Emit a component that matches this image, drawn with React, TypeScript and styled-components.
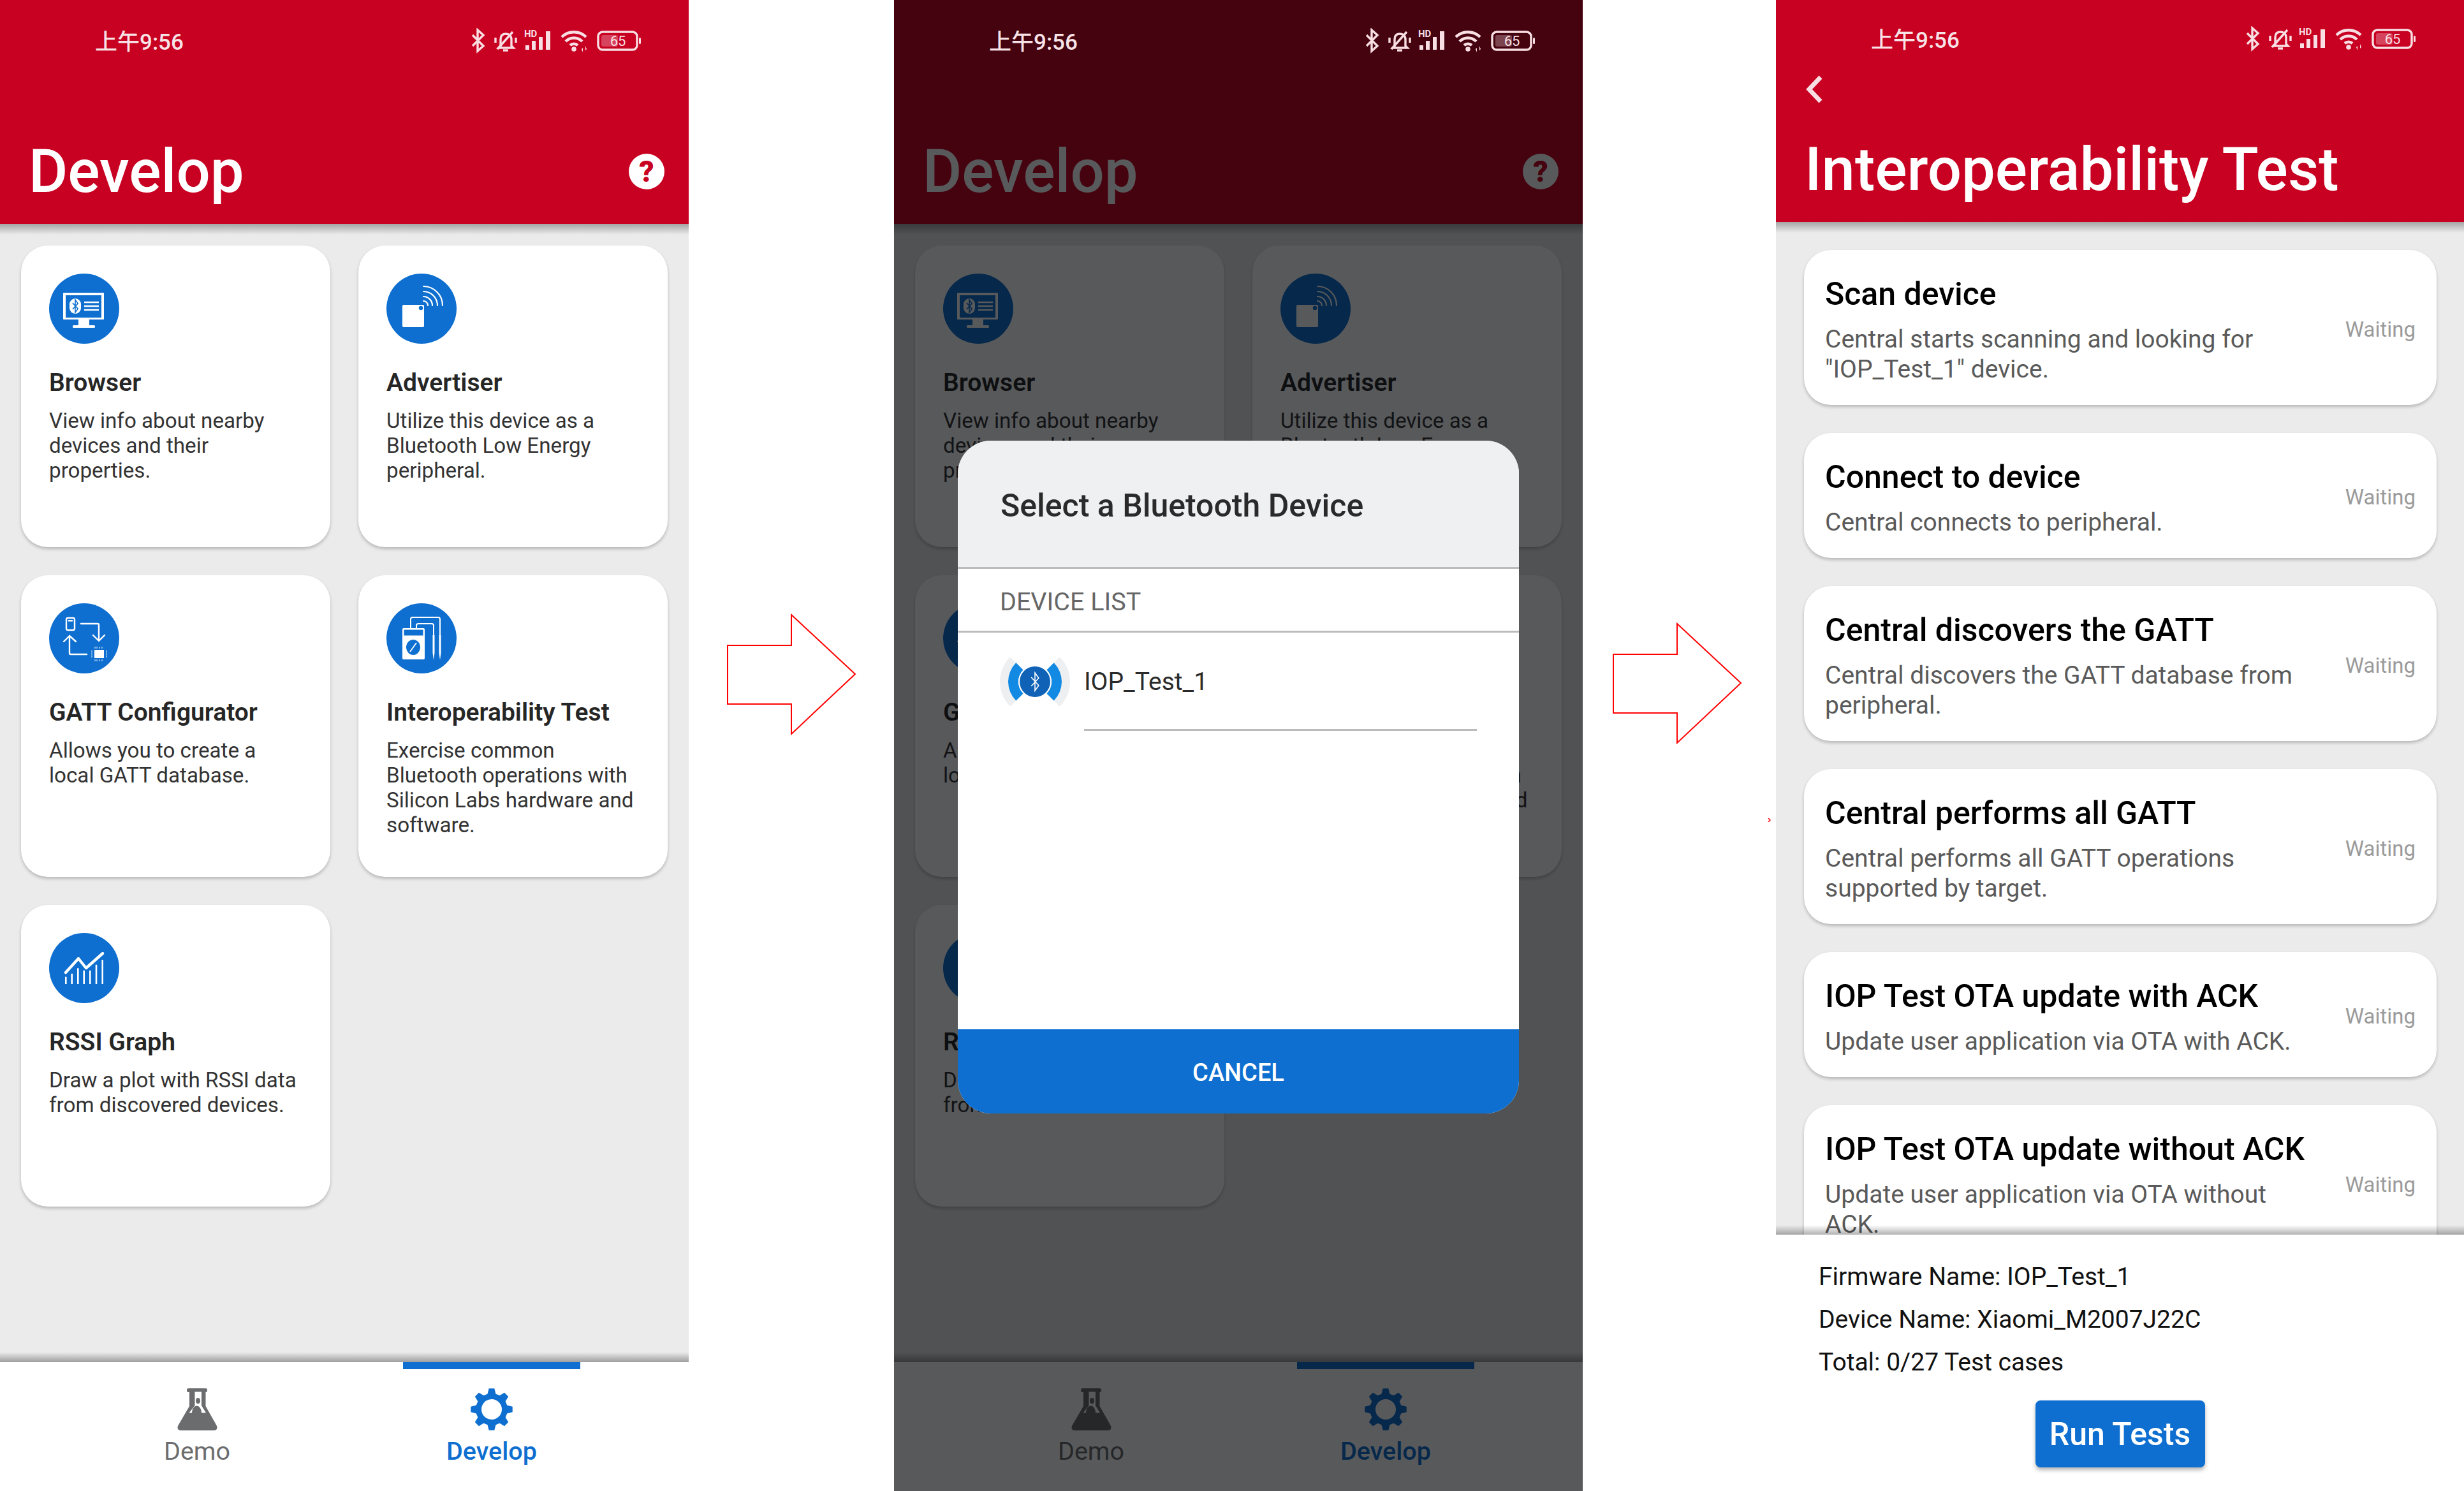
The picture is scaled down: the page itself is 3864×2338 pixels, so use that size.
import React from 'react';
import styled, { createGlobalStyle } from 'styled-components';

const RED = '#c80021';
const BLUE = '#0e6fd0';
const FONT = 'Roboto, "Noto Sans CJK SC", sans-serif';

const GlobalStyle = createGlobalStyle`
  html, body {
    margin: 0;
    padding: 0;
    background: #fff;
    font-family: ${FONT};
  }
`;

const Page = styled.div`
  display: flex;
  width: 3864px;
  height: 2338px;
  overflow: hidden;
  background: #fff;
`;

const Phone = styled.div<{ $width?: number }>`
  position: relative;
  display: flex;
  flex-direction: column;
  flex: none;
  width: ${p => p.$width ?? 1080}px;
  height: 2338px;
  overflow: hidden;
  background: #ebebeb;
`;

const ArrowSlot = styled.div<{ $width: number; $left: number; $top: number }>`
  position: relative;
  flex: none;
  width: ${p => p.$width}px;
  box-sizing: border-box;
  padding: ${p => p.$top}px 0 0 ${p => p.$left}px;
`;

const Speck = styled.svg`
  position: absolute;
  right: 8px;
  top: 1283px;
`;

const Header = styled.header<{ $height: number }>`
  position: relative;
  flex: none;
  height: ${p => p.$height}px;
  background: ${RED};
  &::after {
    content: '';
    position: absolute;
    left: 0;
    right: 0;
    top: 100%;
    height: 17px;
    background: linear-gradient(to bottom, rgba(0, 0, 0, 0.3), rgba(0, 0, 0, 0));
  }
`;

const StatusBar = styled.div<{ $height: number; $iconsRight: number }>`
  position: relative;
  z-index: 2;
  display: flex;
  align-items: center;
  justify-content: space-between;
  height: ${p => p.$height}px;
  padding: 0 ${p => p.$iconsRight}px 0 149px;
`;

const Clock = styled.span`
  margin-top: -3px;
  font-size: 35px;
  font-weight: 500;
  color: #f8e3e6;
`;

const TitleRow = styled.div<{ $top: number }>`
  display: flex;
  align-items: center;
  justify-content: space-between;
  margin-top: ${p => p.$top}px;
  padding: 0 38px 0 45px;
`;

const Title = styled.h1`
  margin: 0;
  font-size: 94px;
  line-height: 110px;
  font-weight: 500;
  color: #fff;
`;

const HelpBadge = styled.span`
  display: flex;
  align-items: center;
  justify-content: center;
  width: 56px;
  height: 56px;
  border-radius: 50%;
  background: #fff;
  color: ${RED};
  font-size: 46px;
  font-weight: 900;
`;

const BackRow = styled.div`
  display: flex;
  height: 48px;
  margin-top: -4px;
  padding-left: 47px;
`;

const Body = styled.main`
  flex: 1;
  min-height: 0;
  overflow: hidden;
`;

const FeatureGrid = styled.div`
  display: grid;
  grid-template-columns: 485px 485px;
  grid-auto-rows: 473px;
  gap: 44px;
  padding: 34px 33px 0;
`;

const FeatureCard = styled.article`
  box-sizing: border-box;
  padding: 44px 46px 0 44px;
  border-radius: 42px;
  background: #fff;
  box-shadow: 0 3px 5px rgba(0, 0, 0, 0.22);
`;

const FeatureTitle = styled.h2`
  margin: 38px 0 17px;
  font-size: 39px;
  line-height: 46px;
  font-weight: 600;
  color: #262626;
`;

const FeatureText = styled.p`
  margin: 0;
  font-size: 33.2px;
  line-height: 39px;
  color: #333;
`;

const TabBar = styled.nav`
  position: relative;
  display: grid;
  flex: none;
  grid-template-columns: 1fr 1fr;
  height: 202px;
  padding: 0 78px;
  background: #fff;
  &::before {
    content: '';
    position: absolute;
    left: 0;
    right: 0;
    bottom: 100%;
    height: 16px;
    background: linear-gradient(to bottom, rgba(0, 0, 0, 0), rgba(0, 0, 0, 0.33));
  }
`;

const Tab = styled.div<{ $active?: boolean }>`
  display: flex;
  flex-direction: column;
  align-items: center;
  color: ${p => (p.$active ? BLUE : '#6b6c6e')};
  &::before {
    content: '';
    width: 278px;
    height: 11px;
    margin-bottom: 30px;
    background: ${p => (p.$active ? BLUE : 'transparent')};
  }
`;

const TabLabel = styled.span<{ $active?: boolean }>`
  margin-top: 10px;
  font-size: 39.5px;
  line-height: 46px;
  font-weight: ${p => (p.$active ? 500 : 400)};
`;

const Overlay = styled.div`
  position: absolute;
  inset: 0;
  z-index: 1;
  display: flex;
  justify-content: center;
  padding-top: 691px;
  box-sizing: border-box;
  background: rgba(2, 3, 6, 0.66);
`;

const Dialog = styled.section`
  display: flex;
  flex-direction: column;
  width: 880px;
  height: 1055px;
  border-radius: 52px;
  overflow: hidden;
  background: #fff;
`;

const DialogHead = styled.div`
  display: flex;
  align-items: center;
  flex: none;
  box-sizing: border-box;
  height: 201px;
  padding: 5px 67px 0;
  background: #eff0f2;
  border-bottom: 3px solid #bbbbbe;
  font-size: 50px;
  font-weight: 500;
  color: #2a2a2a;
`;

const SectionLabel = styled.div`
  display: flex;
  align-items: center;
  flex: none;
  box-sizing: border-box;
  height: 100px;
  padding: 5px 66px 0;
  border-bottom: 3px solid #bbbbbe;
  font-size: 39.5px;
  color: #666;
`;

const DeviceRow = styled.div`
  display: flex;
  align-items: center;
  gap: 22px;
  height: 154px;
  margin: 0 66px;
`;

const DeviceName = styled.div`
  display: flex;
  flex: 1;
  align-items: center;
  height: 100%;
  box-sizing: border-box;
  padding-top: 3px;
  border-bottom: 3px solid #bbbbbe;
  font-size: 39px;
  color: #2a2a2a;
`;

const CancelButton = styled.div`
  display: flex;
  align-items: center;
  justify-content: center;
  flex: none;
  box-sizing: border-box;
  height: 132px;
  margin-top: auto;
  padding-top: 3px;
  background: ${BLUE};
  color: #fff;
  font-size: 38px;
  font-weight: 500;
`;

const TestList = styled.div`
  display: flex;
  flex-direction: column;
  gap: 44px;
  padding: 44px 43px 0 44px;
`;

const TestCard = styled.article`
  display: flex;
  align-items: center;
  flex: none;
  padding: 41px 33px 32px 33px;
  border-radius: 42px;
  background: #fff;
  box-shadow: 0 3px 5px rgba(0, 0, 0, 0.22);
`;

const TestBody = styled.div`
  flex: none;
  width: 766px;
`;

const TestTitle = styled.h3`
  margin: 0 0 20px;
  font-size: 50px;
  line-height: 56px;
  font-weight: 500;
  color: #000;
`;

const TestText = styled.p`
  margin: 0;
  font-size: 39px;
  line-height: 47px;
  color: #5a5a5a;
`;

const TestState = styled.span`
  margin-left: auto;
  margin-bottom: 4px;
  font-size: 33px;
  color: #9a9a9a;
`;

const Summary = styled.footer`
  position: relative;
  flex: none;
  box-sizing: border-box;
  height: 402px;
  padding: 33px 67px 0;
  background: #fff;
  &::before {
    content: '';
    position: absolute;
    left: 0;
    right: 0;
    bottom: 100%;
    height: 15px;
    background: linear-gradient(to bottom, rgba(0, 0, 0, 0), rgba(0, 0, 0, 0.3));
  }
`;

const SummaryLine = styled.div`
  font-size: 39px;
  line-height: 67px;
  color: #111;
`;

const RunButton = styled.div`
  display: flex;
  align-items: center;
  justify-content: center;
  width: 266px;
  height: 105px;
  margin: 26px auto 0;
  border-radius: 8px;
  background: ${BLUE};
  box-shadow: 0 4px 6px rgba(0, 0, 0, 0.3);
  color: #fff;
  font-size: 50px;
  font-weight: 500;
`;

const sector = (cx: number, cy: number, r0: number, r1: number, from: number, to: number) => {
  const pt = (r: number, deg: number) => {
    const a = (deg * Math.PI) / 180;
    return `${(cx + r * Math.cos(a)).toFixed(2)} ${(cy + r * Math.sin(a)).toFixed(2)}`;
  };
  return `M${pt(r0, from)}L${pt(r1, from)}A${r1} ${r1} 0 0 1 ${pt(r1, to)}L${pt(r0, to)}A${r0} ${r0} 0 0 0 ${pt(r0, from)}Z`;
};

const gearPath = (cx: number, cy: number) => {
  const parts: string[] = [];
  for (let i = 0; i < 8; i++) {
    const base = i * 45 - 90;
    [[25, -15], [33, -7.5], [33, 7.5], [25, 15]].forEach(([r, d]) => {
      const a = ((base + d) * Math.PI) / 180;
      parts.push(`${(cx + r * Math.cos(a)).toFixed(2)} ${(cy + r * Math.sin(a)).toFixed(2)}`);
    });
  }
  return `M${parts.join('L')}Z`;
};

const StatusIcons = () => (
  <svg width="272" height="40" viewBox="0 0 272 40" fill="none" stroke="#f8dfe3" strokeWidth="3.4">
    <path d="M3 11l17 17-9 8V3l9 8L3 28" />
    <path d="M47 28V18c0-6 3-9 8-9s9 3 9 9v10l3 3H44z" />
    <path d="M42 33L66 6" />
    <path d="M39 15v8M71 15v8" />
    <path d="M51 35h8" />
    <text x="84" y="14" fontSize="15" fontWeight="700" fill="#f8dfe3" stroke="none" fontFamily="Roboto, sans-serif">HD</text>
    <g fill="#f8dfe3" stroke="none">
      <rect x="86" y="27" width="6" height="7" />
      <rect x="96" y="20" width="6" height="14" />
      <rect x="107" y="14" width="6" height="20" />
      <rect x="118" y="5" width="7" height="29" />
      <circle cx="162" cy="33" r="3.8" />
      <path d="M176 38v-7l-2 2zM180 28v7l2-2z" />
    </g>
    <path d="M143 14a27 27 0 0 1 38 0M149 21a18 18 0 0 1 26 0M156 27a9 9 0 0 1 12 0" strokeWidth="4.4" />
    <rect x="200" y="6" width="61" height="28" rx="7" />
    <rect x="205" y="11" width="26" height="18" rx="3" fill="#f8dfe3" fillOpacity="0.3" stroke="none" />
    <text x="231" y="27.500" fontSize="22" textAnchor="middle" fill="#f8dfe3" stroke="none" fontFamily="Roboto, sans-serif">65</text>
    <rect x="264" y="15" width="3" height="10" rx="1.5" fill="#f8dfe3" stroke="none" />
  </svg>
);

const BluetoothMark = ({ x, y, h, color }: { x: number; y: number; h: number; color: string }) => (
  <path
    transform={`translate(${x} ${y}) scale(${h / 24})`}
    d="M-5 -6L5 5L0 12V-12L5 -5L-5 6"
    fill="none"
    stroke={color}
    strokeWidth={24 / h * 1.6}
  />
);

const IconCircle = ({ children }: { children: React.ReactNode }) => (
  <svg width="110" height="110" viewBox="0 0 110 110" style={{ display: 'block' }}>
    <circle cx="55" cy="55" r="55" fill={BLUE} />
    {children}
  </svg>
);

const BrowserIcon = () => (
  <IconCircle>
    <rect x="22" y="30" width="64" height="42" rx="1" fill="#fff" />
    <rect x="26" y="34" width="56" height="35" fill={BLUE} />
    <rect x="46" y="72" width="17" height="10" fill="#fff" />
    <rect x="37" y="81" width="35" height="4" rx="1.5" fill="#fff" />
    <rect x="32" y="39" width="18" height="24" rx="9" fill="#fff" />
    <BluetoothMark x={41} y={51} h={20} color={BLUE} />
    <path d="M55 45h23M55 51h23M55 57h23" stroke="#fff" strokeWidth="2.6" />
  </IconCircle>
);

const AdvertiserIcon = () => (
  <IconCircle>
    <rect x="25" y="49" width="34" height="35" rx="2" fill="#fff" />
    <circle cx="54" cy="54" r="3.2" fill={BLUE} />
    <path
      d="M58 20a30 30 0 0 1 30 30M58 28a22 22 0 0 1 22 22M58 36a14 14 0 0 1 14 14M58 43a7 7 0 0 1 7 7"
      fill="none"
      stroke="#fff"
      strokeWidth="2.2"
      strokeLinecap="round"
    />
  </IconCircle>
);

const GattIcon = () => (
  <IconCircle>
    <g fill="none" stroke="#fff" strokeWidth="2.4" strokeLinecap="round" strokeLinejoin="round">
      <rect x="27" y="23" width="13" height="19" rx="2.5" />
      <path d="M50 32h26a2 2 0 0 1 2 2v25M69 50l9 9 9-9" />
      <path d="M59 80H34a2 2 0 0 1-2-2V51M23 60l9-9 10 9" />
    </g>
    <rect x="30" y="26" width="7" height="2.5" fill="#fff" />
    <rect x="71" y="73" width="15" height="13" fill="#fff" />
    <path
      d="M72 71v-3M75 71v-3M79 71v-3M83 71v-3M72 91v-3M75 91v-3M79 91v-3M83 91v-3M68 75h-2M68 78h-2M68 81h-2M68 84h-2M91 75h-2M91 78h-2M91 81h-2M91 84h-2"
      stroke="#fff"
      strokeWidth="1"
    />
  </IconCircle>
);

const MeterIcon = () => (
  <IconCircle>
    <rect x="25" y="39" width="35" height="49" rx="2" fill="#fff" />
    <rect x="27.5" y="41.5" width="30" height="9" fill={BLUE} />
    <ellipse cx="42" cy="69" rx="11" ry="12" fill={BLUE} />
    <path d="M37 76l10-14" stroke="#fff" strokeWidth="1.8" />
    <path
      d="M38 39V25a3 3 0 0 1 3-3h40a3 3 0 0 1 3 3v25M47 39v-4a3 3 0 0 1 3-3h21a3 3 0 0 1 3 3v15"
      fill="none"
      stroke="#fff"
      strokeWidth="2"
    />
    <path d="M72.5 50h3v28l-1.5 11-1.5-11zM82.5 50h3v28l-1.5 11-1.5-11z" fill="#fff" />
  </IconCircle>
);

const RssiIcon = () => (
  <IconCircle>
    <path d="M26 62l20-22 12 15 26-23" fill="none" stroke="#fff" strokeWidth="4.4" strokeLinecap="round" strokeLinejoin="round" />
    <path
      d="M26.3 68.7V80M35.7 63.7V80M45.3 55.3V80M54.7 58.7V80M64.3 58.7V80M74 49.7V80M83.7 42V80"
      stroke="#fff"
      strokeWidth="2.6"
    />
  </IconCircle>
);

const DeviceIcon = () => (
  <svg width="110" height="76" viewBox="0 0 110 76" style={{ flex: 'none' }}>
    <path d={sector(55, 38, 42, 55, -45, 45)} fill="#eeeff1" />
    <path d={sector(55, 38, 42, 55, 135, 225)} fill="#eeeff1" />
    <path d={sector(55, 38, 26, 42, -45, 45)} fill="#1289e2" />
    <path d={sector(55, 38, 26, 42, 135, 225)} fill="#1289e2" />
    <circle cx="55" cy="38" r="26" fill="#fff" />
    <circle cx="55" cy="38" r="24" fill="#0f62b5" />
    <BluetoothMark x={55} y={38} h={28} color="#fff" />
  </svg>
);

const FlaskIcon = () => (
  <svg width="65" height="66" viewBox="0 0 65 66">
    <rect x="16" y="0" width="32" height="6" rx="2.5" fill="currentColor" />
    <path d="M20 4h25.500v24l17 30c2.500 4.500 0 8-4 8H6.500c-4 0-6.500-3.500-4-8l17.500-30z" fill="currentColor" />
    <path d="M28.500 5.500h10.500V27l7 11.500H19.500l9-11.500z" fill="#fff" />
    <path d="M24 39c0-7 3.500-11.500 7.500-11.500s7.500 4.500 7.500 11.500z" fill="currentColor" />
    <ellipse cx="33.500" cy="19.500" rx="3.500" ry="4.500" fill="currentColor" />
  </svg>
);

const GearIcon = () => (
  <svg width="68" height="66" viewBox="0 0 68 66">
    <path d={`${gearPath(34, 33)}M50 33a16 16 0 1 0-32 0a16 16 0 1 0 32 0Z`} fillRule="evenodd" fill="currentColor" />
  </svg>
);

const BigArrow = () => (
  <svg width="204" height="193" viewBox="0 0 204 193" style={{ display: 'block' }}>
    <path d="M2 50h100V2l100 93-100 94v-47H2z" fill="none" stroke="#f00" strokeWidth="2" />
  </svg>
);

const features = [
  { title: 'Browser', text: 'View info about nearby devices and their properties.', icon: <BrowserIcon /> },
  { title: 'Advertiser', text: 'Utilize this device as a Bluetooth Low Energy peripheral.', icon: <AdvertiserIcon /> },
  { title: 'GATT Configurator', text: 'Allows you to create a local GATT database.', icon: <GattIcon /> },
  {
    title: 'Interoperability Test',
    text: 'Exercise common Bluetooth operations with Silicon Labs hardware and software.',
    icon: <MeterIcon />,
  },
  { title: 'RSSI Graph', text: 'Draw a plot with RSSI data from discovered devices.', icon: <RssiIcon /> },
];

const tests = [
  { title: 'Scan device', text: 'Central starts scanning and looking for "IOP_Test_1" device.' },
  { title: 'Connect to device', text: 'Central connects to peripheral.' },
  { title: 'Central discovers the GATT', text: 'Central discovers the GATT database from peripheral.' },
  { title: 'Central performs all GATT', text: 'Central performs all GATT operations supported by target.' },
  { title: 'IOP Test OTA update with ACK', text: 'Update user application via OTA with ACK.' },
  { title: 'IOP Test OTA update without ACK', text: 'Update user application via OTA without ACK.' },
];

const DevelopScreen = () => (
  <>
    <Header $height={351}>
      <StatusBar $height={128} $iconsRight={70}>
        <Clock>上午9:56</Clock>
        <StatusIcons />
      </StatusBar>
      <TitleRow $top={86}>
        <Title>Develop</Title>
        <HelpBadge>?</HelpBadge>
      </TitleRow>
    </Header>
    <Body>
      <FeatureGrid>
        {features.map(f => (
          <FeatureCard key={f.title}>
            {f.icon}
            <FeatureTitle>{f.title}</FeatureTitle>
            <FeatureText>{f.text}</FeatureText>
          </FeatureCard>
        ))}
      </FeatureGrid>
    </Body>
    <TabBar>
      <Tab>
        <FlaskIcon />
        <TabLabel>Demo</TabLabel>
      </Tab>
      <Tab $active>
        <GearIcon />
        <TabLabel $active>Develop</TabLabel>
      </Tab>
    </TabBar>
  </>
);

const App: React.FC = () => (
  <>
    <GlobalStyle />
    <Page>
      <Phone>
        <DevelopScreen />
      </Phone>
      <ArrowSlot $width={322} $left={59} $top={962}>
        <BigArrow />
      </ArrowSlot>
      <Phone>
        <DevelopScreen />
        <Overlay>
          <Dialog>
            <DialogHead>Select a Bluetooth Device</DialogHead>
            <SectionLabel>DEVICE LIST</SectionLabel>
            <DeviceRow>
              <DeviceIcon />
              <DeviceName>IOP_Test_1</DeviceName>
            </DeviceRow>
            <CancelButton>CANCEL</CancelButton>
          </Dialog>
        </Overlay>
      </Phone>
      <ArrowSlot $width={303} $left={46} $top={976}>
        <BigArrow />
        <Speck width="5" height="6" viewBox="0 0 5 6">
          <path d="M1 0l3 3-3 3" fill="none" stroke="#f00" strokeWidth="1.5" />
        </Speck>
      </ArrowSlot>
      <Phone $width={1079}>
        <Header $height={348}>
          <StatusBar $height={122} $iconsRight={71}>
            <Clock>上午9:56</Clock>
            <StatusIcons />
          </StatusBar>
          <BackRow>
            <svg width="26" height="44" viewBox="0 0 26 44">
              <path d="M23 3L5 22l18 19" fill="none" stroke="#f8dfe3" strokeWidth="7" />
            </svg>
          </BackRow>
          <TitleRow $top={45}>
            <Title>Interoperability Test</Title>
          </TitleRow>
        </Header>
        <Body>
          <TestList>
            {tests.map(t => (
              <TestCard key={t.title}>
                <TestBody>
                  <TestTitle>{t.title}</TestTitle>
                  <TestText>{t.text}</TestText>
                </TestBody>
                <TestState>Waiting</TestState>
              </TestCard>
            ))}
          </TestList>
        </Body>
        <Summary>
          <SummaryLine>Firmware Name: IOP_Test_1</SummaryLine>
          <SummaryLine>Device Name: Xiaomi_M2007J22C</SummaryLine>
          <SummaryLine>Total: 0/27 Test cases</SummaryLine>
          <RunButton>Run Tests</RunButton>
        </Summary>
      </Phone>
    </Page>
  </>
);

export default App;
